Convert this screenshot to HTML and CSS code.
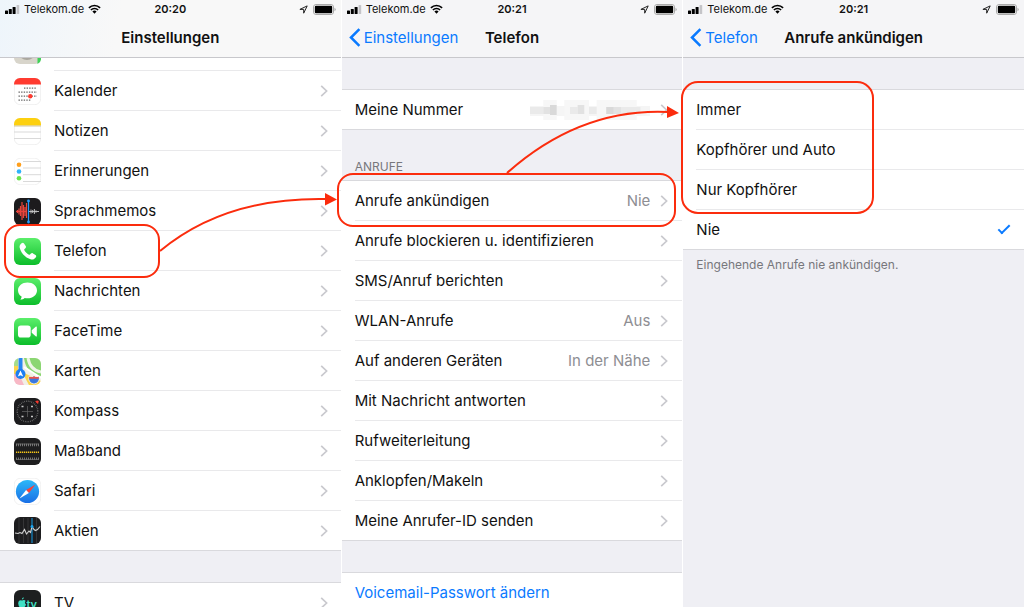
FILE: index.html
```
<!DOCTYPE html>
<html lang="de">
<head>
  <meta charset="utf-8">
  <title>Anrufe ankündigen</title>
  <link rel="stylesheet" href="styles.css">
</head>
<body>
  <!-- shared symbols -->
  <svg class="symbols" aria-hidden="true">
    <symbol id="signal" viewBox="0 0 15 9">
      <rect x="0" y="5.5" width="3" height="3.5" rx=".6"/>
      <rect x="3.8" y="4" width="3" height="5" rx=".6"/>
      <rect x="7.6" y="2" width="3" height="7" rx=".6"/>
      <rect x="11.6" y="0" width="2.6" height="9" rx=".6" fill="#c4c4c8"/>
    </symbol>
    <symbol id="wifi" viewBox="0 0 13 10">
      <path d="M.9 3.8a8 8 0 0 1 11.2 0M2.9 6a5.1 5.1 0 0 1 7.2 0" fill="none" stroke="#000" stroke-width="1.7"/>
      <path d="M6.5 9.8 4.4 7.6a3 3 0 0 1 4.2 0z"/>
    </symbol>
    <symbol id="location" viewBox="0 0 9 9">
      <path d="M.9 4.4 8.2.9 4.7 8.2V4.4z" fill="none" stroke="#222" stroke-width="1" stroke-linejoin="round"/>
    </symbol>
    <symbol id="battery" viewBox="0 0 23 11">
      <rect x=".5" y=".5" width="20" height="10" rx="2.5" fill="#fff" stroke="#aaa"/>
      <rect x="1.8" y="1.8" width="17.4" height="7.4" rx="1.2"/>
      <path d="M21.5 3.8q1.2.5 1.2 1.7t-1.2 1.7z" fill="#aaa"/>
    </symbol>
    <symbol id="chevron" viewBox="0 0 8 12">
      <path d="M1.2.9 6.6 6 1.2 11.1" fill="none" stroke="#c9c9ce" stroke-width="1.7"/>
    </symbol>
    <symbol id="back" viewBox="0 0 12 19">
      <path d="M10.4 1.2 2 9.5l8.4 8.3" fill="none" stroke="#0a7aff" stroke-width="2.5"/>
    </symbol>
  </svg>

  <main class="screens">
    <section class="screen">
      <header class="top top-light">
        <div class="status">
          <div class="carrier">
            <svg class="signal"><use href="#signal"/></svg>
            <span>Telekom.de</span>
            <svg class="wifi"><use href="#wifi"/></svg>
          </div>
          <time>20:20</time>
          <div class="power">
            <svg class="location"><use href="#location"/></svg>
            <svg class="battery"><use href="#battery"/></svg>
          </div>
        </div>
        <nav class="bar"><h1>Einstellungen</h1></nav>
      </header>

      <div class="list">
        <div class="row row-icon row-cut">
          <svg class="icon" viewBox="0 0 27 27">
            <rect width="27" height="27" rx="6" fill="#d8d5cb"/>
            <path d="M23.5 0v27a6 6 0 0 0 3.500-6V6q0-5-3.500-6z" fill="#3fd158"/>
            <circle cx="13" cy="14" r="9" fill="#aaa79f"/>
          </svg>
          <span class="row-body"></span>
        </div>
        <a class="row row-icon" href="#">
          <svg class="icon" viewBox="0 0 27 27">
            <rect x=".3" y=".3" width="26.400" height="26.400" rx="6" fill="#fff" stroke="#e4e4e4" stroke-width=".6"/>
            <path d="M0 6.500V6a6 6 0 0 1 6-6h15a6 6 0 0 1 6 6v.500z" fill="#ff3b30"/>
            <path d="M10 10.200h13M4.500 14.200h18.500M4.500 18.200h18.500M4.500 22.200h13" stroke="#666" stroke-width="1.200" stroke-dasharray="1.400 1.200"/>
            <circle cx="16.300" cy="18.200" r="2.200" fill="#ff3b30"/>
          </svg>
          <span class="row-body">Kalender<svg class="chevron"><use href="#chevron"/></svg></span>
        </a>
        <a class="row row-icon" href="#">
          <svg class="icon" viewBox="0 0 27 27">
            <rect x=".3" y=".3" width="26.400" height="26.400" rx="6" fill="#fff" stroke="#e4e4e4" stroke-width=".6"/>
            <path d="M0 7.500V6a6 6 0 0 1 6-6h15a6 6 0 0 1 6 6v1.500z" fill="#fdd00f"/>
            <path d="M0 8h27" stroke="#c5b98b" stroke-width=".8"/>
            <path d="M0 14h27M0 20.500h27" stroke="#d9d9d9"/>
          </svg>
          <span class="row-body">Notizen<svg class="chevron"><use href="#chevron"/></svg></span>
        </a>
        <a class="row row-icon" href="#">
          <svg class="icon" viewBox="0 0 27 27">
            <rect x=".3" y=".3" width="26.400" height="26.400" rx="6" fill="#fff" stroke="#e9e9e9" stroke-width=".6"/>
            <path d="M9 3.500h18M9 10h18M9 16.700h18M9 23.500h18" stroke="#d9d9d9"/>
            <circle cx="5" cy="6.700" r="2.300" fill="#ff9f1c"/>
            <circle cx="5" cy="13.500" r="2.300" fill="#2eb2fb"/>
            <circle cx="5" cy="20.300" r="2.300" fill="#6ae24b"/>
          </svg>
          <span class="row-body">Erinnerungen<svg class="chevron"><use href="#chevron"/></svg></span>
        </a>
        <a class="row row-icon" href="#">
          <svg class="icon" viewBox="0 0 27 27">
            <rect width="27" height="27" rx="6" fill="#1c1b1d"/>
            <path d="M2 13.500h11" stroke="#e8443c" stroke-width="1.200"/>
            <path d="M3.500 12v3M5 10.500v6M6.500 8v10M8 4v18M9.500 7v13M11 9v9M12.500 5v15" stroke="#e8443c" stroke-width="1.200"/>
            <path d="M15 13.500h10M17 11.500v4M18.700 12v3M20.400 11v5M22 12.300v2.400" stroke="#c9c9c9" stroke-width=".9"/>
            <path d="M14.500 3v21" stroke="#1f9bff" stroke-width="1.200"/>
            <circle cx="14.500" cy="3" r="1.400" fill="#1f9bff"/>
            <circle cx="14.500" cy="24" r="1.400" fill="#1f9bff"/>
          </svg>
          <span class="row-body">Sprachmemos<svg class="chevron"><use href="#chevron"/></svg></span>
        </a>
        <a class="row row-icon" href="#">
          <svg class="icon" viewBox="0 0 27 27">
            <defs>
              <linearGradient id="green" x2="0" y2="1"><stop stop-color="#5bee6b"/><stop offset="1" stop-color="#0cbd2a"/></linearGradient>
            </defs>
            <rect width="27" height="27" rx="6" fill="url(#green)"/>
            <path d="M7.600 5.300c1-.9 1.700-.7 2.400.2l1.700 2.500c.5.900.4 1.500-.3 2.200l-.9.800c-.4.500-.3 1 0 1.500 1 1.600 2.500 3.100 4.100 4.100.5.300 1 .3 1.400-.1l.9-.9c.700-.6 1.300-.7 2.100-.2l2.500 1.700c.9.700 1 1.400.2 2.400-1.300 1.600-2.700 2.300-4.500 1.900-5.500-1.300-10.200-6.100-11.500-11.600-.4-1.800.3-3.200 1.900-4.500z" fill="#fff"/>
          </svg>
          <span class="row-body">Telefon<svg class="chevron"><use href="#chevron"/></svg></span>
        </a>
        <a class="row row-icon" href="#">
          <svg class="icon" viewBox="0 0 27 27">
            <rect width="27" height="27" rx="6" fill="url(#green)"/>
            <path d="M13.500 4.500c5.400 0 9.500 3.500 9.500 7.900s-4.100 7.900-9.500 7.900c-1 0-2-.1-2.800-.4-1 1-2.700 1.700-4.400 1.700.9-.8 1.300-1.900 1.300-3C5.400 17.200 4 15 4 12.400c0-4.400 4.100-7.900 9.500-7.900z" fill="#fff"/>
          </svg>
          <span class="row-body">Nachrichten<svg class="chevron"><use href="#chevron"/></svg></span>
        </a>
        <a class="row row-icon" href="#">
          <svg class="icon" viewBox="0 0 27 27">
            <rect width="27" height="27" rx="6" fill="url(#green)"/>
            <rect x="4" y="7.500" width="12.700" height="12" rx="2.800" fill="#fff"/>
            <path d="M17.700 12.200 22 8.600q.8-.5.800.5v8.800q0 1-.8.500l-4.300-3.600z" fill="#fff"/>
          </svg>
          <span class="row-body">FaceTime<svg class="chevron"><use href="#chevron"/></svg></span>
        </a>
        <a class="row row-icon" href="#">
          <svg class="icon" viewBox="0 0 27 27">
            <clipPath id="maps"><rect width="27" height="27" rx="6"/></clipPath>
            <g clip-path="url(#maps)">
              <rect width="27" height="27" fill="#f2efe6"/>
              <path d="M10 0h17v18Q12 16 10 0z" fill="#8bd672"/>
              <path d="M14 0q2 12 13 14" fill="none" stroke="#eef5e6" stroke-width="3"/>
              <path d="M0 0h4v8H0z" fill="#a5dc8b"/>
              <path d="M0 8h4v8H0z" fill="#fbd34c"/>
              <path d="M0 16h5l5 11H0z" fill="#f8b8c6"/>
              <path d="M8 14l19 9v4H15z" fill="#fbd34c"/>
              <path d="M10 9l17 11" stroke="#fff" stroke-width="2"/>
              <path d="M4.500 0h4v14h-4z" fill="#2887f0"/>
              <circle cx="6.500" cy="16" r="5" fill="#1d7ef2"/>
              <path d="m6.500 12.400 2.700 6.200-2.700-1.300-2.700 1.300z" fill="#fff"/>
              <path d="M15 18.500q2.500 1 5-.5 2.500 1.500 5 .5 1.500 6-5 7.500-6.500-1.500-5-7.500z" fill="#3978df" stroke="#fff" stroke-width=".7"/>
              <path d="M15.300 18.800q2.500.8 4.700-.6 2.500 1.400 4.700.6l.2 1.900h-9.800z" fill="#e8524c"/>
            </g>
          </svg>
          <span class="row-body">Karten<svg class="chevron"><use href="#chevron"/></svg></span>
        </a>
        <a class="row row-icon" href="#">
          <svg class="icon" viewBox="0 0 27 27">
            <rect width="27" height="27" rx="6" fill="#1c1c1e"/>
            <circle cx="13.500" cy="13.500" r="10.300" fill="none" stroke="#777" stroke-width="1.400" stroke-dasharray=".7 1.100"/>
            <path d="M13.500 8v11M8 13.500h11" stroke="#666" stroke-width=".7"/>
            <path d="M7.500 8.500h2M17 8.500h2M7.500 18.500h2M17 18.500h2" stroke="#c8c8c8" stroke-width="1.700"/>
            <path d="m21.800 3.400 2.400-.4-.5 2.400z" fill="#ff3b30" stroke="#ff3b30"/>
          </svg>
          <span class="row-body">Kompass<svg class="chevron"><use href="#chevron"/></svg></span>
        </a>
        <a class="row row-icon" href="#">
          <svg class="icon" viewBox="0 0 27 27">
            <rect width="27" height="27" rx="6" fill="#1e1e1f"/>
            <path d="M2 7h23" stroke="#999" stroke-width="2.600" stroke-dasharray=".7 1.300"/>
            <path d="M2 6h23M2 21.500h23" stroke="#888" stroke-width=".6"/>
            <path d="M2 20.500h23" stroke="#999" stroke-width="2.200" stroke-dasharray=".7 1.300"/>
            <path d="M2 14.300h23" stroke="#f5c518" stroke-width="1.500" stroke-dasharray="1.300 .7"/>
          </svg>
          <span class="row-body">Maßband<svg class="chevron"><use href="#chevron"/></svg></span>
        </a>
        <a class="row row-icon" href="#">
          <svg class="icon" viewBox="0 0 27 27">
            <defs>
              <linearGradient id="blue" x2="0" y2="1"><stop stop-color="#2cb8f8"/><stop offset="1" stop-color="#1a6fe6"/></linearGradient>
            </defs>
            <rect x=".3" y=".3" width="26.400" height="26.400" rx="6" fill="#fff" stroke="#e9e9e9" stroke-width=".6"/>
            <circle cx="13.500" cy="13.500" r="11.600" fill="url(#blue)"/>
            <path d="m21.500 6.500-9.400 5.600 2.800 2.800z" fill="#fb4238"/>
            <path d="m5.500 20.500 6.600-8.400 2.800 2.800z" fill="#fff"/>
          </svg>
          <span class="row-body">Safari<svg class="chevron"><use href="#chevron"/></svg></span>
        </a>
        <a class="row row-icon row-last" href="#">
          <svg class="icon" viewBox="0 0 27 27">
            <rect width="27" height="27" rx="6" fill="#1d1d1f"/>
            <path d="M5 1v25M9.500 1v25M14 1v25M22.500 1v25" stroke="#3b3b3d" stroke-width=".8"/>
            <path d="M18 1v25" stroke="#1489c8" stroke-width="1.200"/>
            <path d="m1 16 3 .5 2-1 2 1 2.500-4 2 4.500 2.500-3 1.500 1.500 1.500-6 2 3 1.500 1 2-1 2.500-3" fill="none" stroke="#d0d0d0" stroke-width="1.100"/>
            <circle cx="18" cy="9.500" r="1.500" fill="#1ca1ea"/>
          </svg>
          <span class="row-body">Aktien<svg class="chevron"><use href="#chevron"/></svg></span>
        </a>
      </div>

      <div class="list list-next">
        <a class="row row-icon" href="#">
          <svg class="icon" viewBox="0 0 27 27">
            <rect width="27" height="27" rx="6" fill="#1d1f20"/>
            <path d="M8.700 10.300q2-.8 3 .8-1.800 1.400.3 3.300-1 3.300-3 3.300-.8-.4-1.600 0-2.600.2-3.200-4.200.2-3.500 3-3.200.8.400 1.500 0zM7.900 9.600q0-2.200 1.900-2.400 0 2.200-1.900 2.400z" fill="#3fe0c5"/>
            <text class="tv-mark" x="12.500" y="17.500">tv</text>
          </svg>
          <span class="row-body">TV<svg class="chevron"><use href="#chevron"/></svg></span>
        </a>
      </div>
    </section>

    <section class="screen">
      <header class="top">
        <div class="status">
          <div class="carrier">
            <svg class="signal"><use href="#signal"/></svg>
            <span>Telekom.de</span>
            <svg class="wifi"><use href="#wifi"/></svg>
          </div>
          <time>20:21</time>
          <div class="power">
            <svg class="location"><use href="#location"/></svg>
            <svg class="battery"><use href="#battery"/></svg>
          </div>
        </div>
        <nav class="bar">
          <a class="back" href="#"><svg class="back-arrow"><use href="#back"/></svg>Einstellungen</a>
          <h1>Telefon</h1>
        </nav>
      </header>

      <div class="list list-next">
        <a class="row row-last" href="#">
          <span class="row-body">Meine Nummer
            <svg class="mosaic" viewBox="0 0 126 20" preserveAspectRatio="none" role="img" aria-label="Nummer unkenntlich">
              <path d="M0 6h126v10H0z" fill="#f5f5f5"/>
              <path d="M14 0h14v20H14zM36 0h26v20H36zM70 0h42v20H70z" fill="#f7f7f7"/>
              <path d="M0 7h14v7H0zM42 7h8v7h-8zM62 7h8v7h-8zM96 7h20v7H96z" fill="#eaeaea"/>
              <path d="M14 7h7v7h-7zM50 5h7v9h-7zM88 7h8v7h-8z" fill="#e2e2e2"/>
              <path d="M21 5h7v10h-7zM80 7h8v7h-8z" fill="#d9d9d9"/>
            </svg>
            <svg class="chevron"><use href="#chevron"/></svg>
          </span>
        </a>
      </div>

      <h2 class="list-title">ANRUFE</h2>
      <div class="list">
        <a class="row" href="#"><span class="row-body">Anrufe ankündigen<span class="value">Nie</span><svg class="chevron"><use href="#chevron"/></svg></span></a>
        <a class="row" href="#"><span class="row-body">Anrufe blockieren u. identifizieren<svg class="chevron"><use href="#chevron"/></svg></span></a>
        <a class="row" href="#"><span class="row-body">SMS/Anruf berichten<svg class="chevron"><use href="#chevron"/></svg></span></a>
        <a class="row" href="#"><span class="row-body">WLAN-Anrufe<span class="value">Aus</span><svg class="chevron"><use href="#chevron"/></svg></span></a>
        <a class="row" href="#"><span class="row-body">Auf anderen Geräten<span class="value">In der Nähe</span><svg class="chevron"><use href="#chevron"/></svg></span></a>
        <a class="row" href="#"><span class="row-body">Mit Nachricht antworten<svg class="chevron"><use href="#chevron"/></svg></span></a>
        <a class="row" href="#"><span class="row-body">Rufweiterleitung<svg class="chevron"><use href="#chevron"/></svg></span></a>
        <a class="row" href="#"><span class="row-body">Anklopfen/Makeln<svg class="chevron"><use href="#chevron"/></svg></span></a>
        <a class="row row-last" href="#"><span class="row-body">Meine Anrufer-ID senden<svg class="chevron"><use href="#chevron"/></svg></span></a>
      </div>

      <div class="list list-next">
        <a class="row row-action" href="#"><span class="row-body">Voicemail-Passwort ändern</span></a>
      </div>
    </section>

    <section class="screen">
      <header class="top">
        <div class="status">
          <div class="carrier">
            <svg class="signal"><use href="#signal"/></svg>
            <span>Telekom.de</span>
            <svg class="wifi"><use href="#wifi"/></svg>
          </div>
          <time>20:21</time>
          <div class="power">
            <svg class="location"><use href="#location"/></svg>
            <svg class="battery"><use href="#battery"/></svg>
          </div>
        </div>
        <nav class="bar">
          <a class="back" href="#"><svg class="back-arrow"><use href="#back"/></svg>Telefon</a>
          <h1>Anrufe ankündigen</h1>
        </nav>
      </header>

      <div class="list list-next">
        <label class="row"><span class="row-body">Immer<input type="radio" name="announce"></span></label>
        <label class="row"><span class="row-body">Kopfhörer und Auto<input type="radio" name="announce"></span></label>
        <label class="row"><span class="row-body">Nur Kopfhörer<input type="radio" name="announce"></span></label>
        <label class="row row-last"><span class="row-body">Nie<input type="radio" name="announce" checked></span></label>
      </div>
      <p class="hint">Eingehende Anrufe nie ankündigen.</p>
    </section>
  </main>

  <!-- red frames and arrows over the three screens -->
  <svg class="marks" viewBox="0 0 1024 607" preserveAspectRatio="none" aria-hidden="true">
    <rect x="5" y="225" width="154" height="52" rx="15"/>
    <rect x="338" y="174" width="337" height="52" rx="15"/>
    <rect x="682" y="82" width="191" height="131" rx="16"/>
    <path d="M160 251Q225 197 326 199"/>
    <path d="M507 173Q580 108 668 112"/>
    <path class="head" d="m325 193 12 6.500-12 6zM667 106l12 7-12 5z"/>
  </svg>
</body>
</html>
```

FILE: styles.css
```
* {
  box-sizing: border-box;
}

body {
  margin: 0;
  height: 100vh;
  overflow: hidden;
  position: relative;
  font-family: Inter, "Liberation Sans", sans-serif;
  font-size: 15px;
  color: #111;
  background-color: #fff;
}

a {
  color: inherit;
  text-decoration: none;
}

svg {
  display: block;
  flex: none;
}

.symbols {
  position: absolute;
  width: 0;
  height: 0;
}

.screens {
  display: grid;
  grid-template-columns: repeat(3, 1fr);
  gap: 1px;
  height: 100%;
}

.screen {
  background-color: #efeff4;
  overflow: hidden;
}

/* status bar and title */
.top {
  background-color: #f5f5f7;
  border-bottom: 1px solid #c8c8cc;
}

.top-light {
  background: linear-gradient(100deg, #eef5fb, #f8f8f8 35%);
}

.status {
  display: grid;
  grid-template-columns: 1fr auto 1fr;
  align-items: center;
  height: 18px;
  padding: 0 5px;
  font-size: 11px;
}

.status time {
  font-weight: 600;
}

.carrier, .power {
  display: flex;
  align-items: center;
  gap: 4px;
}

.power {
  justify-content: flex-end;
  gap: 5px;
}

.signal {
  width: 15px;
  height: 9px;
}

.wifi {
  width: 13px;
  height: 10px;
}

.location {
  width: 9px;
  height: 9px;
}

.battery {
  width: 23px;
  height: 11px;
}

.bar {
  display: grid;
  grid-template-columns: 1fr auto 1fr;
  align-items: center;
  height: 39px;
  padding: 0 7px;
}

.bar h1 {
  grid-column: 2;
  margin: 0;
  font-size: 15px;
  font-weight: 600;
}

.back {
  display: flex;
  align-items: center;
  gap: 3px;
  color: #0a7aff;
}

.back-arrow {
  width: 12px;
  height: 19px;
}

/* lists */
.list {
  background-color: #fff;
}

.list-next {
  margin-top: 31px;
  border-top: 1px solid #d9d9dd;
}

.list-title {
  display: flex;
  align-items: flex-end;
  height: 51px;
  margin: 0;
  padding: 0 13px 6px;
  border-bottom: 1px solid #d9d9dd;
  font-size: 12px;
  font-weight: 400;
  color: #77777c;
}

.row {
  display: flex;
  height: 40px;
  padding-left: 13px;
}

.row-icon {
  align-items: center;
  gap: 13px;
  padding-left: 14px;
}

.icon {
  width: 27px;
  height: 27px;
}

.row-body {
  display: flex;
  flex: 1;
  align-items: center;
  align-self: stretch;
  gap: 10px;
  padding-right: 14px;
  border-bottom: 1px solid #e9e9eb;
}

.row-icon .row-body {
  padding-right: 13px;
}

.row-body > :first-child {
  margin-left: auto;
}

.row-last {
  border-bottom: 1px solid #d9d9dd;
}

.row-last .row-body {
  border-bottom: none;
}

.row-cut {
  height: 13px;
  overflow: hidden;
  align-items: flex-end;
}

.row-cut .icon {
  margin-bottom: 7px;
}

.row-action {
  color: #0a7aff;
}

.value {
  color: #8e8e93;
}

.chevron {
  width: 8px;
  height: 12px;
}

.mosaic {
  width: 120px;
  height: 20px;
}

.tv-mark {
  font-size: 11px;
  font-weight: 600;
  fill: #3fe0c5;
}

input[type=radio] {
  appearance: none;
  width: 12px;
  height: 6px;
  margin: 0 0 4px;
}

input[type=radio]:checked {
  border-left: 2px solid #0a7aff;
  border-bottom: 2px solid #0a7aff;
  transform: rotate(-45deg);
}

.hint {
  margin: 7px 13px;
  font-size: 12px;
  color: #77777c;
}

.marks {
  position: absolute;
  top: 0;
  left: 0;
  width: 100%;
  height: 607px;
  fill: none;
  stroke: #fb2c0d;
  stroke-width: 2;
  pointer-events: none;
}

.head {
  fill: #fb2c0d;
  stroke: none;
}
```
